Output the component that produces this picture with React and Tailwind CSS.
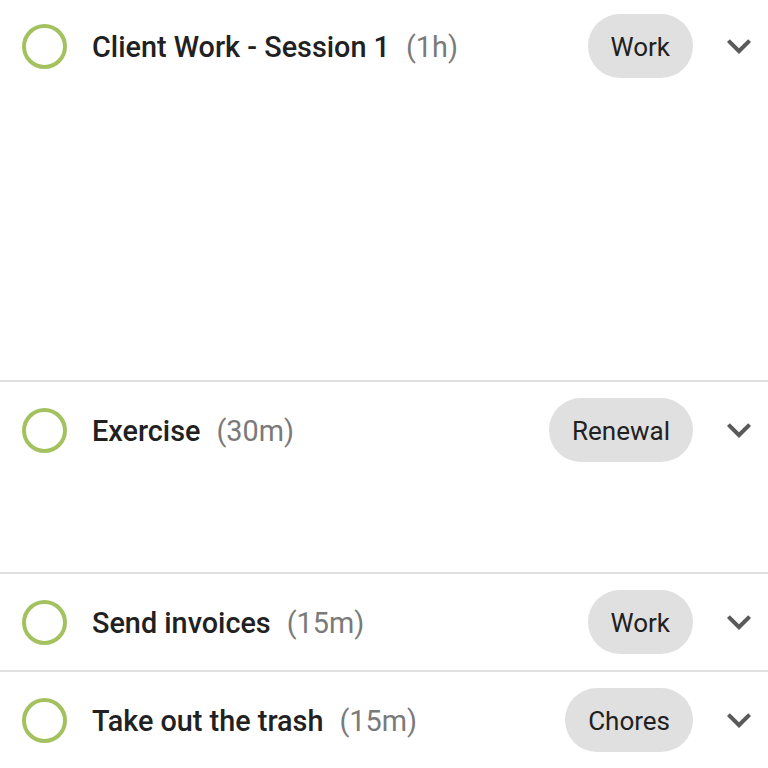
import React from 'react';

const tasks = [
  { id: 1, title: 'Client Work - Session 1', duration: '1h', tag: 'Work', body: 'h-[286px]', top: 'pt-[14px]' },
  { id: 2, title: 'Exercise', duration: '30m', tag: 'Renewal', body: 'h-[94px]', top: 'pt-4' },
  { id: 3, title: 'Send invoices', duration: '15m', tag: 'Work', body: '', top: 'pt-4' },
  { id: 4, title: 'Take out the trash', duration: '15m', tag: 'Chores', body: '', top: 'pt-4' },
];

function Chevron() {
  return (
    <svg viewBox="0 0 24 24" className="w-12 h-12 fill-[#5a5a5a]">
      <path d="M16.59 8.59L12 13.17 7.41 8.59 6 10l6 6 6-6z" />
    </svg>
  );
}

export default function App() {
  return (
    <div className="min-h-screen bg-white font-['Roboto',sans-serif]">
      {tasks.map((t, i) => (
        <div key={t.id} className={i < tasks.length - 1 ? 'border-b-2 border-[#e0e0e0]' : ''}>
          <div className={`flex items-center pl-[22px] pr-[5px] pb-4 ${t.top}`}>
            <div className="w-[45px] h-[45px] rounded-full border-[4px] border-[#a3c25f] shrink-0"></div>
            <div className="ml-[25px] pt-[3px] flex-1 flex items-baseline text-[28.8px] leading-none">
              <span className="font-medium text-[#212121]">{t.title}</span>
              <span className="ml-[16px] text-[#7a7a7a]">({t.duration})</span>
            </div>
            <div className="h-16 px-[23px] pt-[2px] rounded-full bg-[#e0e0e0] flex items-center text-[26px] text-[#212121]">
              {t.tag}
            </div>
            <div className="ml-[22px]">
              <Chevron />
            </div>
          </div>
          {t.body && <div className={t.body}></div>}
        </div>
      ))}
    </div>
  );
}
